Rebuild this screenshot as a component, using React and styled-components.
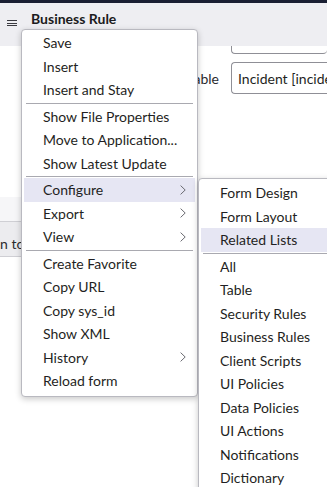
import React from "react";
import styled, { createGlobalStyle } from "styled-components";

const Global = createGlobalStyle`
  html, body { margin: 0; padding: 0; background: #fff; }
  body { font-family: Lato, "Open Sans", sans-serif; color: #1f1f23; overflow: hidden; }
  * { box-sizing: border-box; }
`;

const Page = styled.div`
  position: relative;
  width: 327px;
  height: 487px;
  overflow: hidden;
  display: flex;
  flex-direction: column;
`;

const TopBar = styled.div`
  height: 3px;
  background: #1a1f33;
  flex: none;
`;

const Header = styled.div`
  height: 43px;
  flex: none;
  background: #eeeef2;
  display: flex;
  align-items: flex-start;
  padding: 8px 0 0 7px;
  gap: 14px;
  position: relative;
  z-index: 1;
`;

const Burger = styled.div`
  width: 10px;
  margin-top: 9px;
  display: flex;
  flex-direction: column;
  gap: 1.7px;
  span { display: block; height: 1px; background: #3a3a40; }
`;

const Title = styled.div`
  font-weight: 700;
  font-size: 14px;
  line-height: 16px;
  color: #1b1b20;
  width: 110px;
`;

const Form = styled.div`
  display: grid;
  grid-template-columns: 219px 1fr;
  column-gap: 12px;
  row-gap: 8px;
  align-items: center;
`;

const Label = styled.div`
  font-size: 14px;
  text-align: right;
  color: #2a2a2e;
`;

const Field = styled.div`
  height: ${(p) => (p.$stub ? "8px" : "32px")};
  border: 1px solid #8f8f96;
  border-top: ${(p) => (p.$stub ? "none" : "1px solid #8f8f96")};
  border-radius: ${(p) => (p.$stub ? "0 0 4px 4px" : "4px 0 0 4px")};
  border-right: none;
  font-size: 14px;
  padding: 0 0 0 6px;
  display: flex;
  align-items: center;
  white-space: nowrap;
  overflow: hidden;
  color: #1f1f23;
`;

const Spacer = styled.div`
  height: 103px;
`;

const LightBand = styled.div`
  height: 25px;
  background: #f6f6f8;
  border-bottom: 1px solid #cfcfd4;
`;

const GrayBand = styled.div`
  height: 35px;
  background: #ececef;
  border-bottom: 1px solid #cfcfd4;
  font-size: 14px;
  display: flex;
  align-items: center;
  padding-top: 9px;
  color: #2a2a2e;
`;

const Menu = styled.div`
  position: absolute;
  left: ${(p) => p.$left}px;
  top: ${(p) => p.$top}px;
  width: ${(p) => p.$width}px;
  background: #fff;
  border: 1px solid #b9b9c0;
  border-radius: 4px;
  box-shadow: 0 2px 6px rgba(0, 0, 0, 0.22);
  padding: ${(p) => p.$padTop}px 2px 3px;
  z-index: 5;
`;

const Item = styled.div`
  height: 23.5px;
  display: flex;
  align-items: center;
  justify-content: space-between;
  padding: 0 9px 0 19px;
  font-size: 14px;
  color: #1f1f23;
  white-space: nowrap;
  background: ${(p) => (p.$active ? "#e6e6f3" : "transparent")};
`;

const Sep = styled.div`
  height: 1px;
  margin: 1px 2px;
  background: #a9a9b0;
`;

const Chevron = () => (
  <svg width="6" height="10" viewBox="0 0 6 10">
    <polyline points="0.6,0.6 5.2,5 0.6,9.4" fill="none" stroke="#6b6b72" strokeWidth="1" />
  </svg>
);

const mainMenu = [
  ["Save"], ["Insert"], ["Insert and Stay"], "-",
  ["Show File Properties"], ["Move to Application..."], ["Show Latest Update"], "-",
  ["Configure", true, true], ["Export", true], ["View", true], "-",
  ["Create Favorite"], ["Copy URL"], ["Copy sys_id"], ["Show XML"], ["History", true], ["Reload form"],
];

const subMenu = [
  ["Form Design"], ["Form Layout"], ["Related Lists", false, true], "-",
  ["All"], ["Table"], ["Security Rules"], ["Business Rules"], ["Client Scripts"],
  ["UI Policies"], ["Data Policies"], ["UI Actions"], ["Notifications"], ["Dictionary"], ["Dictionary Entry"],
];

const renderItems = (items) =>
  items.map((it, i) =>
    it === "-" ? (
      <Sep key={i} />
    ) : (
      <Item key={i} $active={it[2]}>
        <span>{it[0]}</span>
        {it[1] && <Chevron />}
      </Item>
    )
  );

export default function App() {
  return (
    <>
      <Global />
      <Page>
        <TopBar />
        <Header>
          <Burger>
            <span />
            <span />
            <span />
          </Burger>
          <Title>Business Rule Fields</Title>
        </Header>
        <Form>
          <div />
          <Field $stub />
          <Label>Table</Label>
          <Field>Incident [incident]</Field>
        </Form>
        <Spacer />
        <LightBand />
        <GrayBand>n to</GrayBand>
        <Menu $left={21} $top={29} $width={177} $padTop={1}>
          {renderItems(mainMenu)}
        </Menu>
        <Menu $left={198} $top={178} $width={160} $padTop={2}>
          {renderItems(subMenu)}
        </Menu>
      </Page>
    </>
  );
}
